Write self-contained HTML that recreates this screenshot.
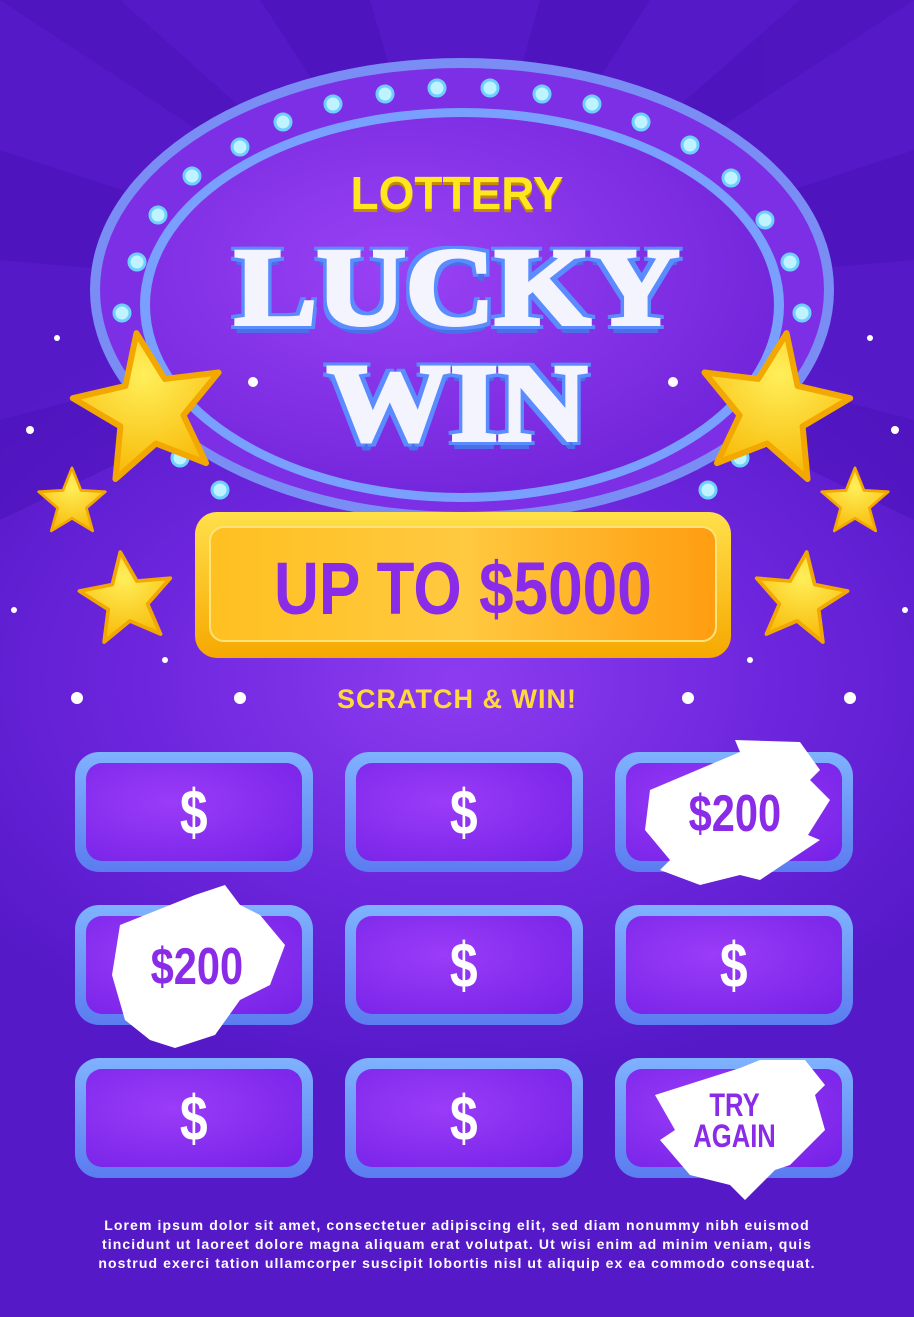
<!DOCTYPE html>
<html><head><meta charset="utf-8"><style>
*{margin:0;padding:0;box-sizing:border-box}
body{width:914px;height:1317px;overflow:hidden;position:relative;font-family:"Liberation Sans",sans-serif;
background:radial-gradient(ellipse 600px 400px at 457px 680px,#8d3cf0 0%,#6c25dc 55%,#5519c8 100%);}
.abs{position:absolute}
.tile{position:absolute;width:238px;height:120px;border-radius:24px;background:linear-gradient(#7fb2ff,#5b7cf0);padding:11px}
.tile div{width:100%;height:100%;border-radius:16px;background:radial-gradient(ellipse at 40% 40%,#9a3cf8,#7421e6);display:flex;align-items:center;justify-content:center;color:#fff;font:bold 64px "Liberation Sans",sans-serif}
.tile div span{display:inline-block;transform:scaleX(0.78)}
.t{position:absolute;left:0;width:914px;text-align:center}
.n{display:inline-block;transform:scaleX(0.8)}
</style></head><body>
<svg class="abs" style="left:0;top:0" width="914" height="1317">
<defs>
<radialGradient id="rg" cx="0.5" cy="0.3" r="0.8"><stop offset="0" stop-color="#ffef5a"/><stop offset="1" stop-color="#f7b500"/></radialGradient>
<radialGradient id="ov" cx="0.4" cy="0.4" r="0.7"><stop offset="0" stop-color="#9a42f5"/><stop offset="1" stop-color="#6e22d8"/></radialGradient>
<linearGradient id="gb" x1="0" y1="0" x2="0" y2="1"><stop offset="0" stop-color="#ffe04a"/><stop offset="1" stop-color="#f6a800"/></linearGradient>
<linearGradient id="gi" x1="0" y1="0" x2="1" y2="0"><stop offset="0" stop-color="#ffc020"/><stop offset="0.5" stop-color="#ffc940"/><stop offset="1" stop-color="#ff9d10"/></linearGradient>
</defs>
<g fill="#4a12b8" opacity="0.55">
<polygon points="457,300 0,0 120,0"/><polygon points="457,300 260,0 370,0"/><polygon points="457,300 540,0 650,0"/><polygon points="457,300 800,0 914,0"/>
<polygon points="457,300 0,150 0,260"/><polygon points="457,300 914,150 914,260"/><polygon points="457,300 0,420 0,520"/><polygon points="457,300 914,420 914,520"/>
</g>
<ellipse cx="462" cy="290" rx="372" ry="232" fill="#7a8df5"/>
<ellipse cx="462" cy="290" rx="362" ry="222" fill="#7d2fe6"/>
<ellipse cx="462" cy="305" rx="322" ry="197" fill="#7aa0ff"/>
<ellipse cx="462" cy="305" rx="312" ry="188" fill="url(#ov)"/>
<g fill="#bff3ff" stroke="#6fd0ff" stroke-width="3">
<circle cx="437" cy="88" r="8"/><circle cx="490" cy="88" r="8"/><circle cx="385" cy="94" r="8"/><circle cx="542" cy="94" r="8"/>
<circle cx="333" cy="104" r="8"/><circle cx="592" cy="104" r="8"/><circle cx="283" cy="122" r="8"/><circle cx="641" cy="122" r="8"/>
<circle cx="240" cy="147" r="8"/><circle cx="690" cy="145" r="8"/><circle cx="192" cy="176" r="8"/><circle cx="731" cy="178" r="8"/>
<circle cx="158" cy="215" r="8"/><circle cx="765" cy="220" r="8"/><circle cx="137" cy="262" r="8"/><circle cx="790" cy="262" r="8"/>
<circle cx="122" cy="313" r="8"/><circle cx="802" cy="313" r="8"/><circle cx="180" cy="458" r="8"/><circle cx="740" cy="458" r="8"/>
<circle cx="220" cy="490" r="8"/><circle cx="708" cy="490" r="8"/>
</g>
<g fill="#fff">
<circle cx="253" cy="382" r="5"/><circle cx="673" cy="382" r="5"/><circle cx="30" cy="430" r="4"/><circle cx="895" cy="430" r="4"/>
<circle cx="77" cy="698" r="6"/><circle cx="240" cy="698" r="6"/><circle cx="688" cy="698" r="6"/><circle cx="850" cy="698" r="6"/>
<circle cx="57" cy="338" r="3"/><circle cx="870" cy="338" r="3"/><circle cx="14" cy="610" r="3"/><circle cx="905" cy="610" r="3"/>
<circle cx="165" cy="660" r="3"/><circle cx="750" cy="660" r="3"/><circle cx="123" cy="455" r="3"/><circle cx="796" cy="455" r="3"/>
</g>
<rect x="195" y="512" width="536" height="146" rx="22" fill="url(#gb)"/>
<rect x="210" y="527" width="506" height="114" rx="14" fill="url(#gi)" stroke="#ffe27a" stroke-width="2"/>
<g fill="url(#rg)" stroke="#f2a800" stroke-width="6" stroke-linejoin="round">
<polygon transform="translate(150,410) rotate(-10)" points="0,-78 20,-28 74,-25 32,11 46,62 0,34 -46,62 -32,11 -74,-25 -20,-28"/>
<polygon transform="translate(773,410) rotate(10)" points="0,-78 20,-28 74,-25 32,11 46,62 0,34 -46,62 -32,11 -74,-25 -20,-28"/>
<polygon transform="translate(72,503) scale(0.45)" points="0,-78 20,-28 74,-25 32,11 46,62 0,34 -46,62 -32,11 -74,-25 -20,-28"/>
<polygon transform="translate(855,503) scale(0.45)" points="0,-78 20,-28 74,-25 32,11 46,62 0,34 -46,62 -32,11 -74,-25 -20,-28"/>
<polygon transform="translate(127,600) rotate(-8) scale(0.62)" points="0,-78 20,-28 74,-25 32,11 46,62 0,34 -46,62 -32,11 -74,-25 -20,-28"/>
<polygon transform="translate(800,600) rotate(8) scale(0.62)" points="0,-78 20,-28 74,-25 32,11 46,62 0,34 -46,62 -32,11 -74,-25 -20,-28"/>
</g>
</svg>
<div class="t" style="top:166px;color:#ffe720;font:bold 46px 'Liberation Sans',sans-serif;text-shadow:0 3px 0 #c88a00">LOTTERY</div>
<div class="t" style="top:232px;color:#f4f4ff;font:900 110px/1 'Liberation Serif',serif;-webkit-text-stroke:4px #f4f4ff;transform:scaleX(1.12);text-shadow:5px 5px 0 #5b8cff,-5px 5px 0 #5b8cff,5px -5px 0 #5b8cff,-5px -5px 0 #5b8cff,0 9px 0 #4a6fe8">LUCKY</div>
<div class="t" style="top:348px;color:#f4f4ff;font:900 110px/1 'Liberation Serif',serif;-webkit-text-stroke:4px #f4f4ff;transform:scaleX(1.12);text-shadow:5px 5px 0 #5b8cff,-5px 5px 0 #5b8cff,5px -5px 0 #5b8cff,-5px -5px 0 #5b8cff,0 9px 0 #4a6fe8">WIN</div>
<div class="t" style="top:552px;left:0;width:926px;color:#8a2be8;font:bold 74px/1 'Liberation Sans',sans-serif"><span class="n" style="transform:scaleX(0.84)">UP TO $5000</span></div>
<div class="t" style="top:684px;color:#ffd93a;font:bold 27px 'Liberation Sans',sans-serif;letter-spacing:1px">SCRATCH &amp; WIN!</div>

<div class="tile" style="left:75px;top:752px"><div><span>$</span></div></div>
<div class="tile" style="left:345px;top:752px"><div><span>$</span></div></div>
<div class="tile" style="left:615px;top:752px"><div><span>$</span></div></div>
<div class="tile" style="left:75px;top:905px"><div><span>$</span></div></div>
<div class="tile" style="left:345px;top:905px"><div><span>$</span></div></div>
<div class="tile" style="left:615px;top:905px"><div><span>$</span></div></div>
<div class="tile" style="left:75px;top:1058px"><div><span>$</span></div></div>
<div class="tile" style="left:345px;top:1058px"><div><span>$</span></div></div>
<div class="tile" style="left:615px;top:1058px"><div><span>$</span></div></div>

<svg class="abs" style="left:0;top:0" width="914" height="1317">
<g fill="#fff">
<path d="M650 790 L740 752 L735 740 L800 742 L820 770 L810 780 L830 800 L808 835 L820 840 L760 880 L740 875 L700 885 L660 870 L670 860 L645 830 Z"/>
<path d="M120 925 L195 895 L225 885 L240 905 L260 915 L285 945 L270 985 L240 1000 L215 1035 L175 1048 L150 1040 L125 1020 L112 975 Z"/>
<path d="M655 1095 L740 1068 L760 1060 L805 1060 L825 1085 L815 1095 L825 1130 L790 1165 L775 1170 L745 1200 L730 1185 L690 1175 L660 1140 L675 1130 Z"/>
</g>
</svg>
<div class="abs" style="left:650px;top:784px;width:170px;text-align:center;color:#8a2be8;font:bold 52px 'Liberation Sans',sans-serif"><span class="n">$200</span></div>
<div class="abs" style="left:112px;top:937px;width:170px;text-align:center;color:#8a2be8;font:bold 52px 'Liberation Sans',sans-serif"><span class="n">$200</span></div>
<div class="abs" style="left:650px;top:1090px;width:170px;text-align:center;color:#8a2be8;font:bold 32px/31px 'Liberation Sans',sans-serif"><span class="n">TRY<br>AGAIN</span></div>

<div class="t" style="top:1216px;color:#fff;font:bold 14px/19px 'Liberation Sans',sans-serif;letter-spacing:1.1px">Lorem ipsum dolor sit amet, consectetuer adipiscing elit, sed diam nonummy nibh euismod<br>tincidunt ut laoreet dolore magna aliquam erat volutpat. Ut wisi enim ad minim veniam, quis<br>nostrud exerci tation ullamcorper suscipit lobortis nisl ut aliquip ex ea commodo consequat.</div>
</body></html>
